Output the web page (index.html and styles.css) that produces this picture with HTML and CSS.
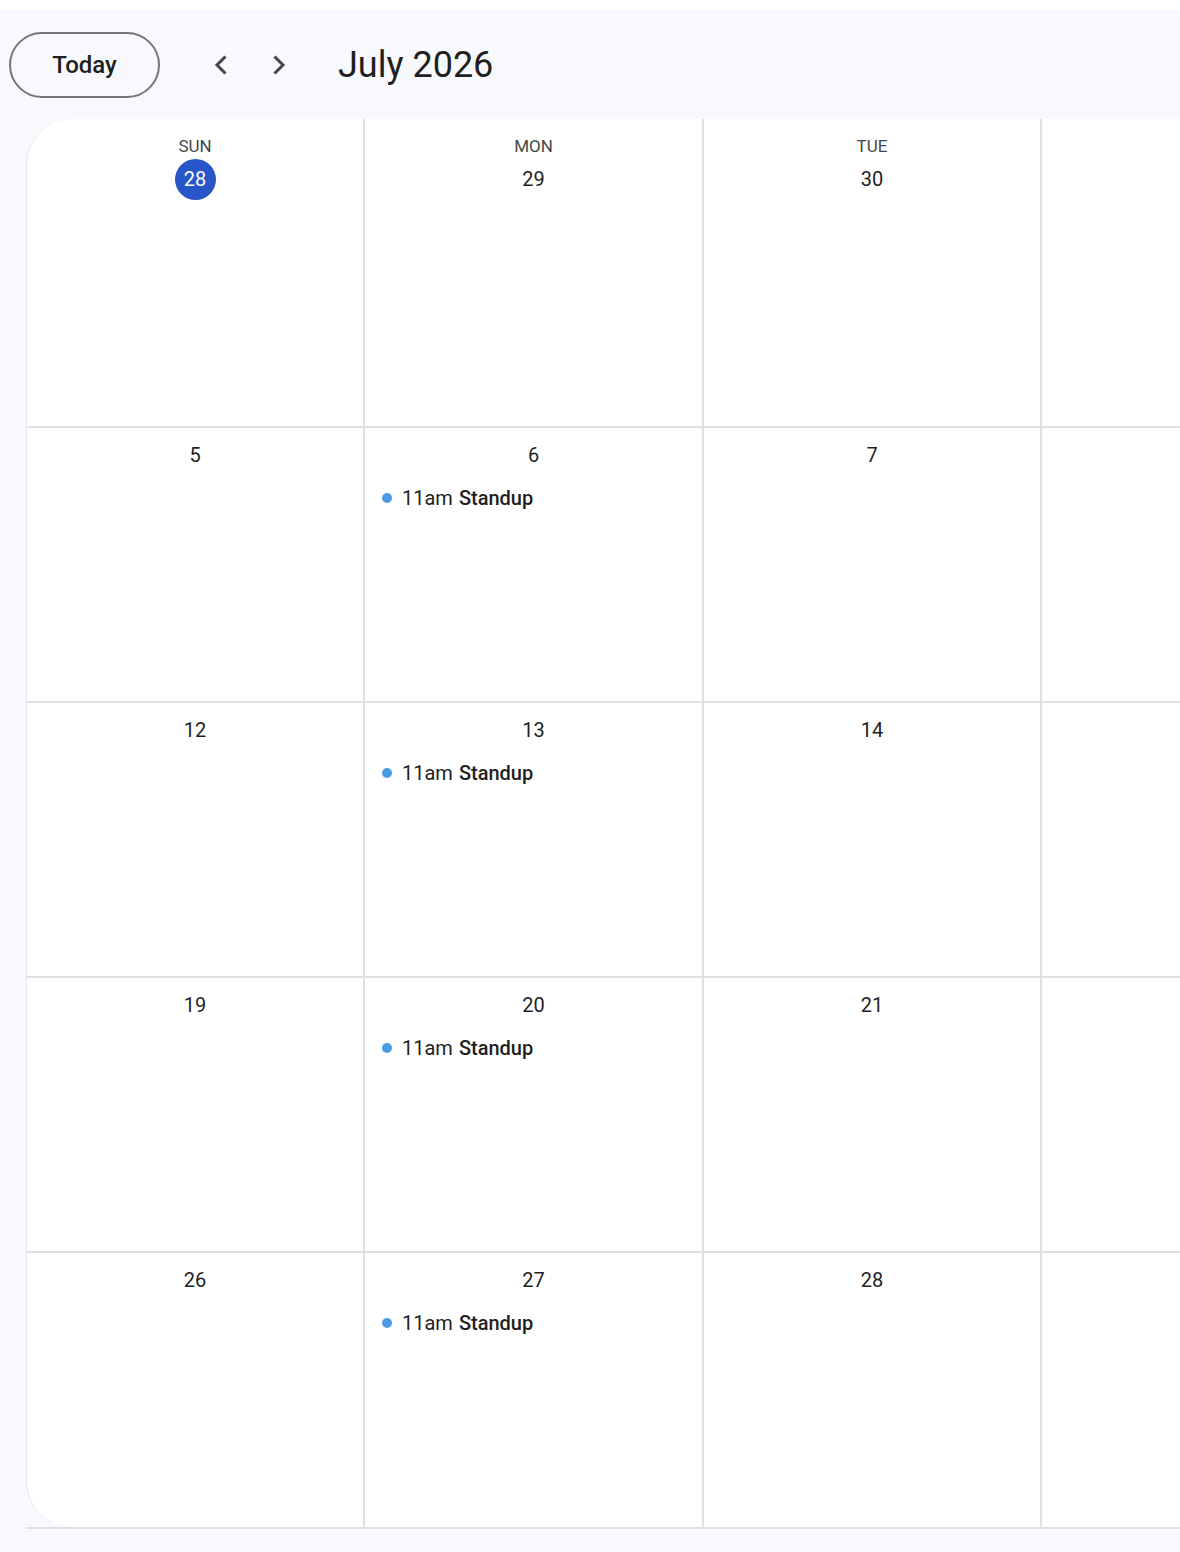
FILE: index.html
```html
<!DOCTYPE html>
<html lang="en">
<head>
<meta charset="utf-8">
<title>July 2026</title>
<link rel="stylesheet" href="styles.css">
</head>
<body>
<div class="app">
  <header class="toolbar">
    <button class="today-btn">Today</button>
    <div class="nav">
      <button class="icon-btn" aria-label="Previous month">
        <svg viewBox="0 0 24 24" width="24" height="24"><polyline points="15.5,3.5 7,12 15.5,20.5" fill="none" stroke="#444746" stroke-width="3"/></svg>
      </button>
      <button class="icon-btn" aria-label="Next month">
        <svg viewBox="0 0 24 24" width="24" height="24"><polyline points="8.5,3.5 17,12 8.5,20.5" fill="none" stroke="#444746" stroke-width="3"/></svg>
      </button>
    </div>
    <h1 class="title">July 2026</h1>
  </header>

  <div class="month-wrap">
    <div class="month">
      <div class="cell first"><div class="dow">SUN</div><div class="date today">28</div></div>
      <div class="cell first"><div class="dow">MON</div><div class="date">29</div></div>
      <div class="cell first"><div class="dow">TUE</div><div class="date">30</div></div>
      <div class="cell first"><div class="dow">WED</div><div class="date">1</div></div>
      <div class="cell first"><div class="dow">THU</div><div class="date">2</div></div>
      <div class="cell first"><div class="dow">FRI</div><div class="date">3</div></div>
      <div class="cell first"><div class="dow">SAT</div><div class="date">4</div></div>

      <div class="cell"><div class="date">5</div></div>
      <div class="cell"><div class="date">6</div><div class="event"><span class="dot"></span><span class="time">11am</span><span class="name">Standup</span></div></div>
      <div class="cell"><div class="date">7</div></div>
      <div class="cell"><div class="date">8</div></div>
      <div class="cell"><div class="date">9</div></div>
      <div class="cell"><div class="date">10</div></div>
      <div class="cell"><div class="date">11</div></div>

      <div class="cell"><div class="date">12</div></div>
      <div class="cell"><div class="date">13</div><div class="event"><span class="dot"></span><span class="time">11am</span><span class="name">Standup</span></div></div>
      <div class="cell"><div class="date">14</div></div>
      <div class="cell"><div class="date">15</div></div>
      <div class="cell"><div class="date">16</div></div>
      <div class="cell"><div class="date">17</div></div>
      <div class="cell"><div class="date">18</div></div>

      <div class="cell"><div class="date">19</div></div>
      <div class="cell"><div class="date">20</div><div class="event"><span class="dot"></span><span class="time">11am</span><span class="name">Standup</span></div></div>
      <div class="cell"><div class="date">21</div></div>
      <div class="cell"><div class="date">22</div></div>
      <div class="cell"><div class="date">23</div></div>
      <div class="cell"><div class="date">24</div></div>
      <div class="cell"><div class="date">25</div></div>

      <div class="cell last"><div class="date">26</div></div>
      <div class="cell last"><div class="date">27</div><div class="event"><span class="dot"></span><span class="time">11am</span><span class="name">Standup</span></div></div>
      <div class="cell last"><div class="date">28</div></div>
      <div class="cell last"><div class="date">29</div></div>
      <div class="cell last"><div class="date">30</div></div>
      <div class="cell last"><div class="date">31</div></div>
      <div class="cell last"><div class="date">Aug 1</div></div>
    </div>
  </div>
</div>
</body>
</html>
```

FILE: styles.css
```css
* { box-sizing: border-box; }

html, body {
  margin: 0;
  padding: 0;
  background: #ffffff;
  overflow: hidden;
}

body {
  padding-top: 10px;
  font-family: Roboto, "Noto Sans", "Liberation Sans", sans-serif;
  color: #1f1f1f;
  width: 1180px;
  height: 1552px;
}

.app {
  background: #f8f9fc;
  height: 1542px;
  overflow: hidden;
}

.toolbar {
  height: 109px;
  display: flex;
  align-items: center;
  padding-left: 9px;
}

.today-btn {
  width: 151px;
  height: 66px;
  border: 2px solid #747775;
  border-radius: 33px;
  background: transparent;
  font-family: inherit;
  font-size: 24px;
  font-weight: 500;
  color: #1f1f1f;
  padding: 0;
  margin-top: 1px;
}

.nav {
  display: flex;
  gap: 8px;
  margin-left: 38px;
}

.icon-btn {
  width: 48px;
  height: 48px;
  border: none;
  background: transparent;
  padding: 0;
  display: flex;
  align-items: center;
  justify-content: center;
}

.title {
  margin: 0 0 0 36px;
  font-size: 36px;
  font-weight: 400;
  color: #1f1f1f;
}

.month-wrap {
  margin-left: 26px;
  width: 2400px;
  border-bottom: 2px solid #dde1e6;
}

.month {
  background: #ffffff;
  border-left: 1px solid #e3e6ea;
  border-radius: 46px 0 0 46px;
  overflow: hidden;
  display: grid;
  grid-template-columns: 338px 339px 338px 338.5px 338.5px 338.5px 338.5px;
  grid-template-rows: 309px 275px 275px 275px 274px;
}

.cell {
  border-right: 2px solid #dde1e6;
  border-bottom: 2px solid #dde1e6;
  padding-top: 7px;
  display: flex;
  flex-direction: column;
  align-items: center;
}

.cell.last { border-bottom: none; }

.dow {
  padding-top: 10px;
  line-height: 20px;
  margin-bottom: 3px;
  font-size: 17px;
  font-weight: 400;
  color: #444746;
}

.date {
  height: 41px;
  min-width: 41px;
  line-height: 41px;
  text-align: center;
  font-size: 20px;
  font-weight: 400;
  color: #1f1f1f;
}

.date.today {
  background: #2856c8;
  color: #ffffff;
  border-radius: 50%;
  width: 41px;
}

.event {
  align-self: stretch;
  margin-top: 10px;
  padding-left: 17px;
  height: 24px;
  line-height: 24px;
  display: flex;
  align-items: center;
  font-size: 20px;
  white-space: nowrap;
}

.dot {
  width: 10px;
  height: 10px;
  border-radius: 50%;
  background: #4a9be4;
  margin-right: 10px;
  flex: none;
}

.time {
  font-weight: 400;
  color: #1f1f1f;
  margin-right: 6px;
}

.name {
  font-weight: 500;
  color: #1f1f1f;
}
```
